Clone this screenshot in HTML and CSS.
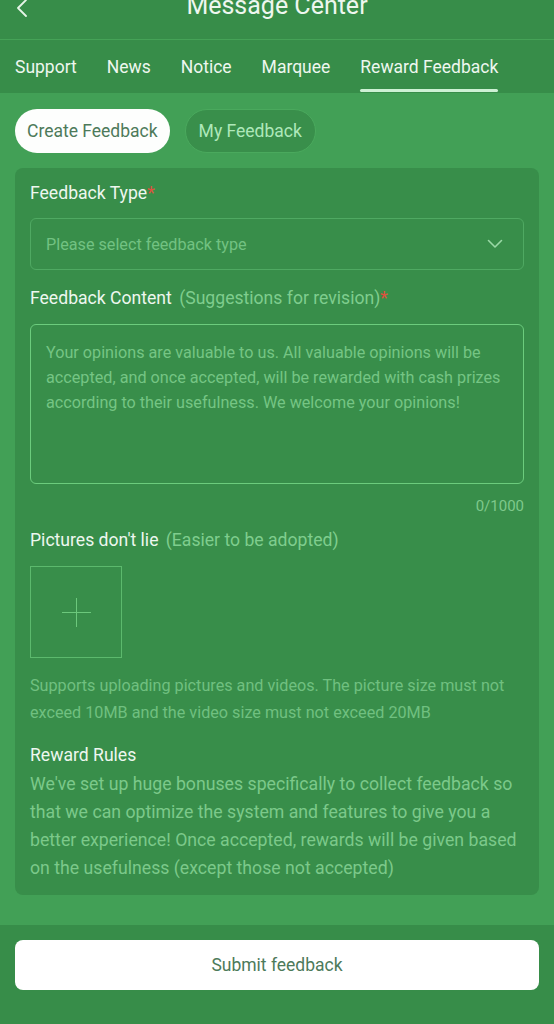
FILE: index.html
```html
<!DOCTYPE html>
<html lang="en">
<head>
<meta charset="utf-8">
<title>Message Center</title>
<link rel="stylesheet" href="styles.css">
</head>
<body>
<div class="page">
  <header class="topbar">
    <svg class="back" width="14" height="20" viewBox="0 0 14 20"><path d="M11 2 L3 10 L11 18" fill="none" stroke="#e6f5e8" stroke-width="1.8" stroke-linecap="round" stroke-linejoin="round"/></svg>
    <h1 class="title">Message Center</h1>
  </header>
  <nav class="tabs">
    <span class="tab">Support</span>
    <span class="tab">News</span>
    <span class="tab">Notice</span>
    <span class="tab">Marquee</span>
    <span class="tab active">Reward Feedback</span>
  </nav>
  <main class="content">
    <div class="pills">
      <span class="pill pill-on">Create Feedback</span>
      <span class="pill pill-off">My Feedback</span>
    </div>
    <section class="card">
      <div class="label">Feedback Type<span class="req">*</span></div>
      <div class="select">
        <span class="placeholder">Please select feedback type</span>
        <svg class="chev" width="16" height="10" viewBox="0 0 16 10"><path d="M1.5 1.5 L8 8 L14.5 1.5" fill="none" stroke="#9ad9a6" stroke-width="1.6" stroke-linecap="round" stroke-linejoin="round"/></svg>
      </div>
      <div class="label gap">Feedback Content <span class="sub">(Suggestions for revision)</span><span class="req">*</span></div>
      <div class="textarea">Your opinions are valuable to us. All valuable opinions will be accepted, and once accepted, will be rewarded with cash prizes according to their usefulness. We welcome your opinions!</div>
      <div class="counter">0/1000</div>
      <div class="label pics">Pictures don't lie <span class="sub">(Easier to be adopted)</span></div>
      <div class="upload"><span class="plus-h"></span><span class="plus-v"></span></div>
      <p class="hint">Supports uploading pictures and videos. The picture size must not exceed 10MB and the video size must not exceed 20MB</p>
      <div class="label rules-title">Reward Rules</div>
      <p class="rules">We've set up huge bonuses specifically to collect feedback so that we can optimize the system and features to give you a better experience! Once accepted, rewards will be given based on the usefulness (except those not accepted)</p>
    </section>
  </main>
  <footer class="footer">
    <button class="submit">Submit feedback</button>
  </footer>
</div>
</body>
</html>
```

FILE: styles.css
```css
* { box-sizing: border-box; }
html, body { margin: 0; padding: 0; }
body {
  font-family: Roboto, "Liberation Sans", sans-serif;
  background: #42a056;
  color: #eef7ef;
  width: 554px;
  height: 1024px;
  overflow: hidden;
}
.page {
  display: flex;
  flex-direction: column;
  height: 1024px;
}
.topbar {
  height: 40px;
  background: #378d49;
  display: flex;
  justify-content: center;
  position: relative;
  border-bottom: 1px solid #45a257;
}
.back {
  position: absolute;
  left: 15px;
  top: -2px;
}
.title {
  margin: -5px 0 0 0;
  font-size: 25px;
  line-height: 22px;
  font-weight: 400;
  color: #eef7ef;
}
.tabs {
  height: 53px;
  background: #378d49;
  display: flex;
  gap: 30px;
  padding: 1px 15px 0;
  align-items: flex-start;
}
.tab {
  font-size: 17.5px;
  line-height: 52px;
  color: #eef7ef;
  position: relative;
  white-space: nowrap;
}
.tab.active::after {
  content: "";
  position: absolute;
  left: 0;
  right: 0;
  bottom: 1px;
  height: 3px;
  border-radius: 2px;
  background: #cdf1d4;
}
.content {
  flex: 1;
  padding: 16px 15px 30px;
}
.pills {
  display: flex;
  gap: 15px;
}
.pill {
  height: 44px;
  border-radius: 22px;
  padding: 0 12px;
  display: flex;
  align-items: center;
  font-size: 17.5px;
}
.pill-on {
  background: #fdfefd;
  color: #4d7a5a;
}
.pill-off {
  background: #398f4b;
  border: 1px solid #4aa95d;
  color: #aee8ba;
  padding: 0 13px;
}
.card {
  margin-top: 15px;
  background: #388e4a;
  border-radius: 8px;
  padding: 13px 15px 13px;
}
.label {
  font-size: 17.6px;
  line-height: 24px;
  color: #eef7ef;
  white-space: nowrap;
}
.label .sub {
  color: #7fcd8e;
  margin-left: 3px;
}
.req { color: #e0503e; }
.label.gap { margin-top: 16px; }
.select {
  margin-top: 13px;
  height: 52px;
  border: 1px solid #4fa962;
  border-radius: 6px;
  display: flex;
  align-items: center;
  justify-content: space-between;
  padding: 0 20px 0 15px;
}
.placeholder {
  font-size: 16.2px;
  color: #72c282;
}
.textarea {
  margin-top: 14px;
  height: 160px;
  border: 1px solid #6ccc7d;
  border-radius: 6px;
  padding: 15px 15px;
  font-size: 16.2px;
  line-height: 25px;
  color: #75c584;
}
.counter {
  text-align: right;
  font-size: 15px;
  line-height: 24px;
  margin-top: 10px;
  color: #7fc98c;
}
.label.pics { margin-top: 10px; }
.upload {
  margin-top: 14px;
  width: 92px;
  height: 92px;
  border: 1px solid #5cb96d;
  position: relative;
}
.plus-h, .plus-v {
  position: absolute;
  background: #6cc87c;
}
.plus-h { left: 31px; top: 45px; width: 29px; height: 1px; }
.plus-v { left: 45px; top: 31px; width: 1px; height: 29px; }
.hint {
  margin: 14px 0 0;
  font-size: 16.2px;
  line-height: 27px;
  color: #70c080;
}
.label.rules-title { margin-top: 17px; }
.rules {
  margin: 3px 0 0;
  font-size: 17.7px;
  line-height: 28px;
  color: #7cc98a;
}
.footer {
  background: #378d49;
  height: 99px;
  padding: 15px 15px 0;
}
.submit {
  width: 100%;
  height: 50px;
  border: none;
  border-radius: 8px;
  background: #ffffff;
  font-family: Roboto, "Liberation Sans", sans-serif;
  font-size: 17.5px;
  color: #4d7a5a;
}
```
